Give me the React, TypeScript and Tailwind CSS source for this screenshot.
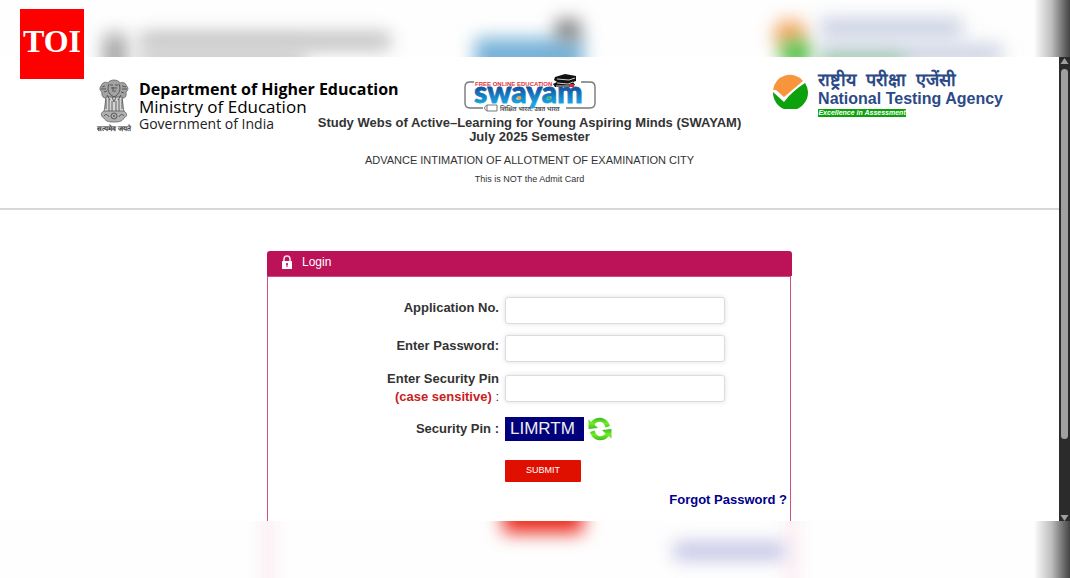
import React, { useState } from "react";

function Emblem() {
  return (
    <svg viewBox="0 0 34 44" className="w-[34px] h-11" role="img" aria-label="State Emblem of India">
      <g fill="#a3a3a3" stroke="#555" strokeWidth="0.7">
        <path d="M4 7 C2 9 3 12 5 13 C4 17 7 20 10 19 L24 19 C28 20 30 17 29 13 C32 11 31 8 29 6 C28 3 25 3 23 4 C21 0 13 0 11 4 C8 2 5 4 4 7 Z" />
        <path d="M9 18 L25 18 L27 33 L7 33 Z" fill="#d4d4d4" />
        <path d="M7 32 C3 34 4 38 7 39 C9 43 13 43 17 43 C21 43 25 43 27 39 C31 37 30 34 27 32 Z" fill="#b0b0b0" />
      </g>
      <g fill="none" stroke="#444" strokeWidth="0.8">
        <path d="M12 5 C10 10 11 15 17 18 C23 15 24 10 22 5" />
        <path d="M13 6 H16 M18 6 H21 M14 9 H20 M15 12 H19 M16 8 V11" />
        <path d="M5 8 L8 7 M4 10 L9 10 M7 13 L10 12 M25 7 L29 8 M25 10 L30 10 M24 13 L27 14" />
        <path d="M9 20 V30 M12 20 V32 M15 22 V32 M19 22 V32 M22 20 V32 M25 20 V30" />
        <path d="M10 16 L13 21 M24 16 L21 21 M15 18 L17 23 L19 18" />
        <circle cx="17" cy="37" r="3" fill="#ddd" />
        <path d="M14 37 H20 M17 34 V40 M15 35 L19 39 M19 35 L15 39" strokeWidth="0.5" />
        <path d="M7 37 C9 34 11 36 12 38 M22 38 C23 35 26 35 27 37" />
      </g>
    </svg>
  );
}

function SwayamLogo() {
  return (
    <svg viewBox="0 0 134 42" className="w-[134px] h-[42px]" role="img" aria-label="Swayam">
      <defs>
        <linearGradient id="swayamBlue" x1="0" y1="0" x2="0" y2="1">
          <stop offset="0.4" stopColor="#12529f" />
          <stop offset="0.85" stopColor="#19a5e5" />
        </linearGradient>
      </defs>
      <path d="M90 9 H7 Q2 9 2 14 V30 Q2 35 7 35 H20 M103 35 H127 Q132 35 132 30 V14 Q132 9 127 9 H118" fill="none" stroke="#777" strokeWidth="1.4" />
      <path d="M11 7 H92 V12 H11 Z" fill="#fff" />
      <text x="11" y="30" fontFamily="Lato, sans-serif" fontWeight="900" fontSize="30" fill="url(#swayamBlue)" stroke="url(#swayamBlue)" strokeWidth="0.8">swayam</text>
      <text x="12" y="13" fontFamily="'Liberation Sans', sans-serif" fontWeight="700" fontSize="6" fill="#e0343c">FREE ONLINE EDUCATION</text>
      <circle cx="56" cy="25" r="2" fill="#f0a030" />
      <circle cx="86" cy="25" r="2" fill="#35b36a" />
      <path d="M24 32 H34 V38 H24 Q19 35 24 32 Z M24 32 V38" fill="#fff" stroke="#777" />
      <text x="37" y="38" fontFamily="'Noto Sans', sans-serif" fontWeight="700" fontSize="6" fill="#555">शिक्षित भारत, उन्नत भारत</text>
      <path d="M92 4 L102 1 L113 3 V8 L110 9 L112 12 L109 14 L92 14 L90 11 L94 9 L91 7 Z" fill="#111" />
      <path d="M94 6 L106 7 L112 5 M94 10 L105 11 L110 9 M93 13 H106" stroke="#fff" strokeWidth="0.8" fill="none" />
      <path d="M106 11 L111 11 L111 14 L106 14 Z" fill="#d52b32" />
    </svg>
  );
}

function NtaMark() {
  return (
    <svg viewBox="0 0 36 36" className="w-9 h-9 shrink-0" aria-hidden="true">
      <path d="M1 17 A17 17 0 0 1 31 8 L12 24 L4 17 Z" fill="#f7953d" />
      <path d="M33 10 A17.5 17.5 0 1 1 1 19 L12 29 C18 21 25 15 33 10 Z" fill="#0ea10e" />
    </svg>
  );
}

function LockIcon() {
  return (
    <svg viewBox="0 0 12 14" className="w-3 h-3.5" aria-hidden="true">
      <path d="M3 7 V4 Q3 1 6 1 Q9 1 9 4 V7" fill="none" stroke="#f3dbe6" strokeWidth="1.6" />
      <rect x="1" y="6" width="10" height="8" rx="0.5" fill="#fff" />
      <circle cx="6" cy="9" r="1.1" fill="#bc1258" />
      <path d="M5.5 9 H6.5 V12 H5.5 Z" fill="#bc1258" />
    </svg>
  );
}

function RefreshIcon() {
  return (
    <svg viewBox="0 0 24 24" className="w-6 h-6" aria-hidden="true">
      <defs>
        <linearGradient id="refreshGreen" x1="0" y1="0" x2="0" y2="1">
          <stop offset="0" stopColor="#3fb52c" />
          <stop offset="0.5" stopColor="#6ff01c" />
          <stop offset="1" stopColor="#3fb52c" />
        </linearGradient>
      </defs>
      <g fill="url(#refreshGreen)">
        <path d="M0.5 2.5 L3 5 C8 -1.5 19 -1 22 9 L17.5 10.5 C16 4 10 3 6.5 7.5 L10 11 L0.5 12 Z" />
        <path d="M23.5 21.5 L21 19 C16 25.5 5 25 2 15 L6.5 13.5 C8 20 14 21 17.5 16.5 L14 13 L23.5 12 Z" />
      </g>
    </svg>
  );
}

const inputClass =
  "w-[220px] h-[27px] px-2 text-[13px] bg-white border border-[#dcdcdc] rounded-[3px] shadow-[0_0_5px_rgba(0,0,0,0.12)] outline-none";
const labelClass = "flex-1 text-right text-[13px] leading-[18px] font-bold text-[#333]";

function EdgeShade() {
  return <div className="absolute inset-y-0 right-0 w-9 bg-linear-to-r from-transparent via-[#bbbbbb] to-[#454545]" />;
}

export default function App() {
  const [form, setForm] = useState({ application: "", password: "", pin: "" });
  const update = (e: React.ChangeEvent<HTMLInputElement>) =>
    setForm({ ...form, [e.target.name]: e.target.value });

  return (
    <div className="relative min-h-screen flex flex-col bg-[#fefefe] font-['Liberation_Sans',Arial,sans-serif]">
      <div className="absolute z-10 left-5 top-[9px] w-16 h-[70px] bg-[#ff0000] text-white text-center font-['Liberation_Serif',serif] font-bold text-[32px] leading-[64px]">
        TOI
      </div>

      {/* Soft backdrop above the page */}
      <div className="relative h-[57px] overflow-hidden" aria-hidden="true">
        <div className="absolute left-[104px] top-[34px] w-[22px] h-10 bg-[#a0a0a0] blur-[9px]" />
        <div className="absolute left-[140px] top-[33px] w-[250px] h-4 bg-[#b8b8b8] blur-[9px]" />
        <div className="absolute left-[140px] top-[48px] w-[165px] h-6 bg-[#cccccc] blur-[9px]" />
        <div className="absolute left-[475px] top-[38px] w-[108px] h-9 bg-[#76b2d8] blur-[9px]" />
        <div className="absolute left-[556px] top-[20px] w-6 h-5 bg-[#777] blur-[9px]" />
        <div className="absolute left-[774px] top-[20px] w-8 h-7 rounded-full bg-[#f5a560] blur-[9px]" />
        <div className="absolute left-[780px] top-[40px] w-8 h-7 rounded-full bg-[#4cc040] blur-[9px]" />
        <div className="absolute left-[820px] top-[18px] w-[142px] h-5 bg-[#cad0e2] blur-[9px]" />
        <div className="absolute left-[820px] top-[44px] w-[182px] h-5 bg-[#ccd2e2] blur-[9px]" />
        <div className="absolute left-[820px] top-[56px] w-[84px] h-5 bg-[#8fcb9a] blur-[9px]" />
        <EdgeShade />
      </div>

      <div className="flex-1 flex bg-white">
        <main className="flex-1 flex flex-col">
          <header className="grid border-b-2 border-[#d8d8d8] h-[153px]">
            <div className="[grid-area:1/1] flex items-start justify-between pl-[97px] pr-14">
              <div className="flex gap-2 pt-[22px]">
                <div className="w-[34px] flex flex-col items-center">
                  <Emblem />
                  <span className="text-[7px] leading-3 font-bold whitespace-nowrap text-[#333]">सत्यमेव जयते</span>
                </div>
                <div className="font-['Open_Sans',sans-serif] text-black whitespace-nowrap">
                  <p className="text-[16px] leading-5 font-bold">Department of Higher Education</p>
                  <p className="text-[17px] leading-4">Ministry of Education</p>
                  <p className="text-[14px] leading-[18px] text-[#222]">Government of India</p>
                </div>
              </div>
              <div className="flex gap-2.5 pt-3.5 text-[#2c4a87] whitespace-nowrap">
                <div className="pt-0.5">
                  <NtaMark />
                </div>
                <div>
                  <p className="text-[18px] leading-[18px] font-semibold">राष्ट्रीय&nbsp; परीक्षा&nbsp; एजेंसी</p>
                  <p className="text-[16px] leading-5 font-bold">National Testing Agency</p>
                  <p className="w-[88px] bg-[#0ea10e] text-white text-[7px] leading-2 font-bold italic text-center">Excellence in Assessment</p>
                </div>
              </div>
            </div>
            <div className="[grid-area:1/1] flex flex-col items-center pt-4 text-[#333] text-center">
              <SwayamLogo />
              <h1 className="text-[13px] leading-3.5 font-bold pt-px">
                Study Webs of Active–Learning for Young Aspiring Minds (SWAYAM)
                <br />
                July 2025 Semester
              </h1>
              <p className="text-[11px] leading-4 pt-2">ADVANCE INTIMATION OF ALLOTMENT OF EXAMINATION CITY</p>
              <p className="text-[9px] leading-4 pt-[3px]">This is NOT the Admit Card</p>
            </div>
          </header>

          <section className="flex-1 flex flex-col w-full max-w-[525px] mx-auto pt-[41px]">
            <h2 className="flex items-center gap-[9px] h-[25px] pl-3.5 pb-[3px] bg-[#bc1258] rounded-t-[3px] text-white text-[12px]">
              <LockIcon />
              Login
            </h2>
            <form
              onSubmit={(e) => e.preventDefault()}
              className="flex-1 mr-px pt-3.5 border-x border-t border-[#cf4c84]"
            >
              <div className="flex items-center gap-1.5 h-[38px] pr-[65px]">
                <label htmlFor="application" className={labelClass + " pb-1"}>Application No.</label>
                <input id="application" name="application" value={form.application} onChange={update} className={inputClass} />
              </div>
              <div className="flex items-center gap-1.5 h-[38px] pr-[65px]">
                <label htmlFor="password" className={labelClass + " pb-1"}>Enter Password:</label>
                <input id="password" name="password" type="password" value={form.password} onChange={update} className={inputClass} />
              </div>
              <div className="flex items-center gap-1.5 h-[42px] pr-[65px]">
                <label htmlFor="pin" className={labelClass}>
                  Enter Security Pin
                  <br />
                  <span className="text-[#c9211e]">(case sensitive)</span> <span className="font-normal">:</span>
                </label>
                <input id="pin" name="pin" value={form.pin} onChange={update} className={inputClass} />
              </div>
              <div className="flex items-center gap-1.5 h-10 pr-[65px]">
                <span className={labelClass}>Security Pin :</span>
                <div className="w-[220px] flex items-center gap-1">
                  <span className="w-[79px] h-6 bg-[#00007c] text-[#eeeeee] text-[17px] leading-6 pl-[5px]">LIMRTM</span>
                  <button type="button" aria-label="Refresh security pin">
                    <RefreshIcon />
                  </button>
                </div>
              </div>
              <div className="flex items-center justify-end h-11 pr-[65px]">
                <div className="w-[220px] flex">
                  <button type="submit" className="w-[76px] h-[22px] bg-[#e01000] rounded-[1px] text-white text-[9px]">SUBMIT</button>
                </div>
              </div>
              <div className="flex justify-end pr-[3px]">
                <a href="#forgot" className="text-[13px] leading-3.5 font-bold text-[#00008b]">Forgot Password ?</a>
              </div>
            </form>
          </section>
        </main>

        {/* Scroll track */}
        <div className="w-[11px] bg-[#2b2b2b] flex flex-col items-center" aria-hidden="true">
          <svg viewBox="0 0 11 12" className="w-[11px] h-3">
            <path d="M5.5 1 L9.5 7 H1.5 Z" fill="#a0a0a0" />
          </svg>
          <div className="w-[7px] flex-84 bg-[#a0a0a0] rounded-full" />
          <div className="flex-16" />
          <svg viewBox="0 0 11 12" className="w-[11px] h-3">
            <path d="M5.5 12 L9.5 6 H1.5 Z" fill="#a0a0a0" />
          </svg>
        </div>
      </div>

      {/* Soft backdrop below the page */}
      <div className="relative h-[57px] overflow-hidden" aria-hidden="true">
        <div className="absolute left-[258px] -top-5 w-5 h-24 bg-[#fcf3f6] blur-[6px]" />
        <div className="absolute left-[782px] -top-5 w-5 h-24 bg-[#fcf3f6] blur-[6px]" />
        <div className="absolute left-[503px] -top-6 w-[80px] h-9 bg-[#ea2a1c] blur-[9px]" />
        <div className="absolute left-[674px] top-[22px] w-[110px] h-4 bg-[#bcbce2] blur-[9px]" />
        <EdgeShade />
      </div>
    </div>
  );
}
